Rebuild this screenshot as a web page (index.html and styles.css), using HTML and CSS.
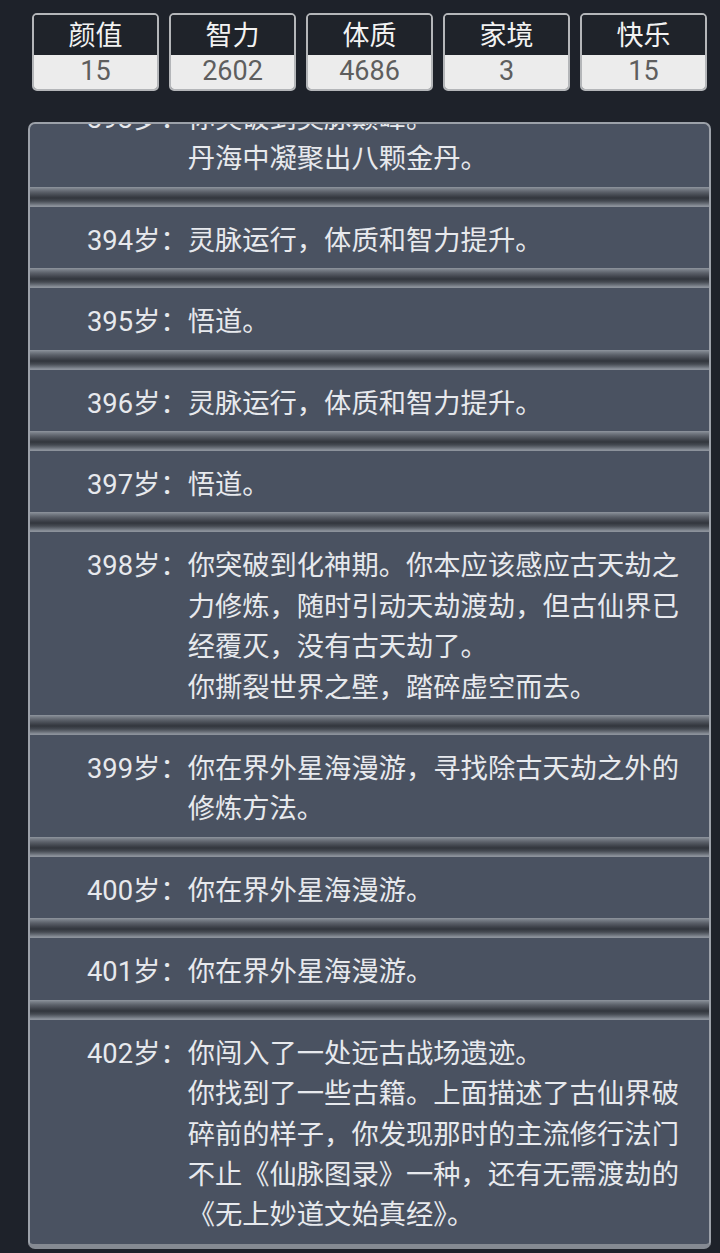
FILE: index.html
```html
<!DOCTYPE html>
<html lang="zh-CN">
<head>
<meta charset="utf-8">
<title>人生重开</title>
<link rel="stylesheet" href="styles.css">
</head>
<body>
<div class="stats">
  <div class="stat"><div class="stat-label">颜值</div><div class="stat-value">15</div></div>
  <div class="stat"><div class="stat-label">智力</div><div class="stat-value">2602</div></div>
  <div class="stat"><div class="stat-label">体质</div><div class="stat-value">4686</div></div>
  <div class="stat"><div class="stat-label">家境</div><div class="stat-value">3</div></div>
  <div class="stat"><div class="stat-label">快乐</div><div class="stat-value">15</div></div>
</div>
<div class="panel">
  <div class="list">
    <div class="row"><span class="age">393岁：</span><span class="text">你突破到灵脉巅峰。<br>丹海中凝聚出八颗金丹。</span></div>
    <div class="sep"></div>
    <div class="row"><span class="age">394岁：</span><span class="text">灵脉运行，体质和智力提升。</span></div>
    <div class="sep"></div>
    <div class="row"><span class="age">395岁：</span><span class="text">悟道。</span></div>
    <div class="sep"></div>
    <div class="row"><span class="age">396岁：</span><span class="text">灵脉运行，体质和智力提升。</span></div>
    <div class="sep"></div>
    <div class="row"><span class="age">397岁：</span><span class="text">悟道。</span></div>
    <div class="sep"></div>
    <div class="row"><span class="age">398岁：</span><span class="text">你突破到化神期。你本应该感应古天劫之力修炼，随时引动天劫渡劫，但古仙界已经覆灭，没有古天劫了。<br>你撕裂世界之壁，踏碎虚空而去。</span></div>
    <div class="sep"></div>
    <div class="row"><span class="age">399岁：</span><span class="text">你在界外星海漫游，寻找除古天劫之外的修炼方法。</span></div>
    <div class="sep"></div>
    <div class="row"><span class="age">400岁：</span><span class="text">你在界外星海漫游。</span></div>
    <div class="sep"></div>
    <div class="row"><span class="age">401岁：</span><span class="text">你在界外星海漫游。</span></div>
    <div class="sep"></div>
    <div class="row"><span class="age">402岁：</span><span class="text">你闯入了一处远古战场遗迹。<br>你找到了一些古籍。上面描述了古仙界破碎前的样子，你发现那时的主流修行法门不止《仙脉图录》一种，还有无需渡劫的《无上妙道文始真经》。</span></div>
  </div>
</div>
</body>
</html>
```

FILE: styles.css
```css
html, body {
  margin: 0;
  padding: 0;
}
body {
  background: #1e222a;
  font-family: Roboto, "Noto Sans CJK SC", sans-serif;
  width: 720px;
  height: 1253px;
  overflow: hidden;
}
.stats {
  display: flex;
  gap: 10px;
  padding: 13px 0 0 32px;
}
.stat {
  width: 127px;
  box-sizing: border-box;
  border: 2px solid #b4b6b9;
  border-radius: 5px;
  overflow: hidden;
  text-align: center;
}
.stat-label {
  height: 40px;
  line-height: 42px;
  background: #1f232a;
  color: #f2f2f2;
  font-size: 27px;
}
.stat-value {
  height: 34px;
  line-height: 33px;
  background: #ececec;
  color: #5e5e5e;
  font-size: 27px;
}
.panel {
  margin: 31px 0 0 28px;
  width: 683px;
  height: 1127px;
  box-sizing: border-box;
  background: #4a5261;
  border: 2px solid #9ca1a9;
  border-bottom: 5px solid #858a92;
  border-radius: 7px;
  overflow: hidden;
}
.list {
  margin-top: -39px;
}
.row {
  display: flex;
  padding: 14px 16px 7px 57px;
  font-size: 27.3px;
  line-height: 40.4px;
  color: #e7e9ed;
}
.age {
  flex: none;
}
.text {
  flex: 1;
  min-width: 0;
}
.sep {
  height: 20px;
  background: linear-gradient(to bottom,
    #8f959e 0,
    #777d86 2px,
    #5b6069 5px,
    #3e424a 9px,
    #32363d 11px,
    #454a52 14px,
    #6c727b 17px,
    #8c929b 19px,
    #8c929b 20px);
}
```
